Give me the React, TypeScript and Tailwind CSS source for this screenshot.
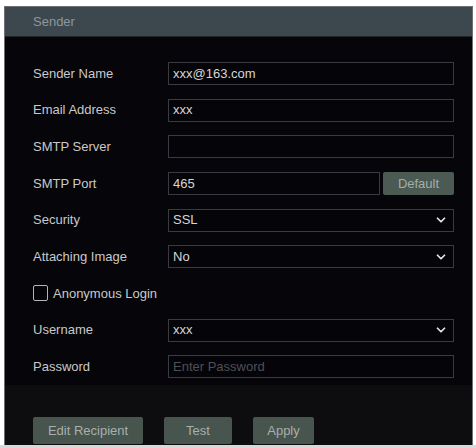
import { ChevronDown } from "lucide-react";

const font = { fontFamily: '"Liberation Sans", Arial, sans-serif' };

type Row =
  | { label: string; kind: "text"; value?: string; placeholder?: string }
  | { label: string; kind: "select"; value: string }
  | { label: string; kind: "port"; value: string }
  | { label: string; kind: "check" };

const rows: Row[] = [
  { label: "Sender Name", kind: "text", value: "xxx@163.com" },
  { label: "Email Address", kind: "text", value: "xxx" },
  { label: "SMTP Server", kind: "text", value: "" },
  { label: "SMTP Port", kind: "port", value: "465" },
  { label: "Security", kind: "select", value: "SSL" },
  { label: "Attaching Image", kind: "select", value: "No" },
  { label: "Anonymous Login", kind: "check" },
  { label: "Username", kind: "select", value: "xxx" },
  { label: "Password", kind: "text", placeholder: "Enter Password" },
];

const Field = ({ children, grow = true }: { children?: React.ReactNode; grow?: boolean }) => (
  <div
    className={`${grow ? "flex-1" : ""} h-[23px] border border-[#3a3b42] bg-[#040409] flex items-center pl-[4px] pr-[5px] text-[13px] text-[#d6d6d6]`}
  >
    {children}
  </div>
);

const SenderRow = ({ row }: { row: Row }) => {
  if (row.kind === "check") {
    return (
      <div className="h-[36.7px] flex items-center">
        <div className="w-[15px] h-[16px] border-[1.5px] border-[#b5b5b5] rounded-[2px]" />
        <span className="ml-[5px] text-[13px] text-[#c9c9c9]">{row.label}</span>
      </div>
    );
  }
  return (
    <div className="h-[36.7px] flex items-center">
      <span className="w-[135px] shrink-0 text-[13px] text-[#c9c9c9]">{row.label}</span>
      {row.kind === "text" && (
        <Field>
          {row.value ? (
            <span>{row.value}</span>
          ) : row.placeholder ? (
            <span className="text-[#4f5055]">{row.placeholder}</span>
          ) : null}
        </Field>
      )}
      {row.kind === "select" && (
        <Field>
          <span className="flex-1">{row.value}</span>
          <ChevronDown size={14} strokeWidth={3} className="text-[#e6e6e6]" />
        </Field>
      )}
      {row.kind === "port" && (
        <div className="flex-1 flex items-center gap-[3px]">
          <Field>
            <span>{row.value}</span>
          </Field>
          <button className="w-[71px] h-[23px] rounded-[2px] bg-[#4b5a53] text-[13px] text-[#a3aea8]">
            Default
          </button>
        </div>
      )}
    </div>
  );
};

export default function App() {
  return (
    <div className="w-[476px] h-[448px] bg-[#d9d9d9] overflow-hidden" style={font}>
      <div className="h-[6px] bg-white" />
      <div className="flex">
        <div className="w-[4px] bg-white" />
        <div className="w-[469px] h-[439px] flex flex-col border border-[#6d6f72] border-b-0 bg-[#05050a]">
          <div className="h-[30px] shrink-0 bg-[#3d484e] border-b border-[#20262a] flex items-center pl-[28px] text-[13px] text-[#8c979c]">
            Sender
          </div>
          <div className="flex flex-col pt-[18px] pl-[28px] pr-[18px]">
            {rows.map((row) => (
              <SenderRow key={row.label} row={row} />
            ))}
          </div>
          <div className="flex-1 bg-[#0d0d0f] flex items-end gap-[21px] pl-[28px] pb-[1px]">
            <button className="w-[110px] h-[27px] rounded-[2px] bg-[#48544e] text-[13px] text-[#a7b0ab]">
              Edit Recipient
            </button>
            <button className="w-[68px] h-[27px] rounded-[2px] bg-[#48544e] text-[13px] text-[#a7b0ab]">
              Test
            </button>
            <button className="w-[61px] h-[27px] rounded-[2px] bg-[#48544e] text-[13px] text-[#a7b0ab]">
              Apply
            </button>
          </div>
        </div>
        <div className="w-[3px] bg-white" />
      </div>
    </div>
  );
}
